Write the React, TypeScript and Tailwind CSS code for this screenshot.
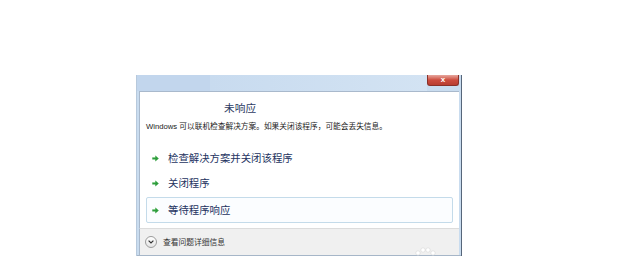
import React from "react";

const Arrow = () => (
  <svg width="7" height="7" viewBox="0 0 7 7" className="shrink-0">
    <path d="M0.3 2.5H3.3V0.4L6.8 3.5L3.3 6.6V4.5H0.3Z" fill="#2e9d3c" />
    <path d="M0.3 2.5H3.3V0.4L5 2H0.3Z" fill="#6cc96f" opacity="0.6" />
  </svg>
);

const Link = ({ text, boxed }: { text: string; boxed?: boolean }) => (
  <div
    className={
      boxed
        ? "flex items-center h-[26px] pl-[5px] border border-[#c4dbea] rounded-[2px] bg-[#fbfdff]"
        : "flex items-center h-[24px] pl-[6px]"
    }
  >
    <Arrow />
    <span className="ml-[9px] text-[10.4px] leading-[14px] text-[#24335f]">{text}</span>
  </div>
);

export default function App() {
  return (
    <div
      className="w-[640px] h-[256px] bg-white overflow-hidden"
      style={{ fontFamily: '"Liberation Sans", "Noto Sans CJK SC", sans-serif' }}
    >
      <div className="pt-[75px] pl-[136px]">
        <div className="w-[326px] h-[181px] flex flex-col bg-[#c9dcef] border-r border-[#56667a] border-l border-l-[#b7c9dc]">
          {/* title bar */}
          <div className="h-[16px] flex shrink-0">
            <div className="w-[73px] bg-[#c2d6ed]" />
            <div className="flex-1 bg-gradient-to-r from-[#c8dbef] to-[#d3e3f3]" />
            <div className="w-[32px] h-[11px] mr-[2px] rounded-b-[3px] border border-[#8a3028] border-t-0 bg-gradient-to-b from-[#e6a79f] via-[#cc4b3e] to-[#b83d30] flex items-center justify-center">
              <span className="text-white text-[8px] leading-[8px] font-bold">x</span>
            </div>
          </div>
          {/* body */}
          <div className="flex-1 flex flex-col px-[2px]">
            <div className="h-[137px] bg-white flex flex-col border-t border-l border-[#a9b9cc]">
              <div className="pl-[84px] pt-[9px] text-[10.7px] leading-[14px] text-[#2d3b63]" style={{ fontFamily: '"Noto Sans CJK SC", sans-serif' }}>
                未响应
              </div>
              <div className="pl-[6px] mt-[6px] text-[7.7px] leading-[12px] text-[#222]">
                Windows 可以联机检查解决方案。如果关闭该程序，可能会丢失信息。
              </div>
              <div className="mt-[13px] px-[6px] flex flex-col" style={{ fontFamily: '"Noto Sans CJK SC", sans-serif' }}>
                <Link text="检查解决方案并关闭该程序" />
                <div className="h-[1px]" />
                <Link text="关闭程序" />
                <div className="h-[2px]" />
                <Link text="等待程序响应" boxed />
              </div>
            </div>
            <div className="h-[27px] bg-[#f0f0f0] border-t border-[#dcdcdc] border-l border-l-[#a9b9cc] flex items-center pl-[5px] relative">
              <div className="w-[12px] h-[12px] rounded-full border border-[#9c9c9c] bg-gradient-to-b from-white to-[#e4e4e4] flex items-center justify-center">
                <svg width="6" height="4" viewBox="0 0 6 4">
                  <path d="M0.6 0.6L3 3L5.4 0.6" fill="none" stroke="#333" strokeWidth="1.2" />
                </svg>
              </div>
              <span className="ml-[6px] text-[7.75px] leading-[10px] text-[#333]" style={{ fontFamily: '"Noto Sans CJK SC", sans-serif' }}>
                查看问题详细信息
              </span>
              <svg width="30" height="12" viewBox="0 0 30 12" className="absolute left-[272px] top-[16px]">
                <circle cx="6" cy="8" r="2.2" fill="#fff" stroke="#d0d0d0" strokeWidth="0.5" />
                <circle cx="11" cy="5" r="2.2" fill="#fff" stroke="#d0d0d0" strokeWidth="0.5" />
                <circle cx="16" cy="5" r="2.2" fill="#fff" stroke="#d0d0d0" strokeWidth="0.5" />
                <circle cx="21" cy="8" r="2.2" fill="#fff" stroke="#d0d0d0" strokeWidth="0.5" />
              </svg>
            </div>
          </div>
          <div className="h-[1px] bg-[#a6b6c8]" />
        </div>
      </div>
    </div>
  );
}
